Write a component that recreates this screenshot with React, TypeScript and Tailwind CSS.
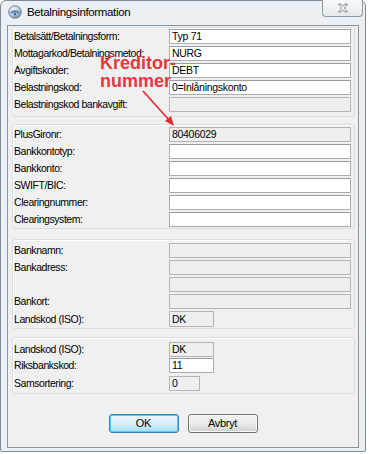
import React from "react";

const font = { fontFamily: '"Liberation Sans", Arial, sans-serif' };

function Field({
  label,
  value,
  disabled,
  width = "w-[184px]",
  height = "h-[15px]",
  className = "",
}: {
  label?: string;
  value?: string;
  disabled?: boolean;
  width?: string;
  height?: string;
  className?: string;
}) {
  return (
    <div className={`flex items-center ${className}`}>
      <div className="w-[156px] shrink-0 pl-[1px] text-[10.5px] tracking-[-0.45px] text-black leading-none whitespace-nowrap">
        {label}
      </div>
      <div
        className={`${width} ${height} flex items-center pl-[2px] text-[10.5px] tracking-[-0.3px] leading-none text-black border ${
          disabled
            ? "bg-[#efefef] border-[#b4b4b4]"
            : "bg-white border-[#abadb3] border-t-[#9a9ca3]"
        }`}
      >
        {value}
      </div>
    </div>
  );
}

function Group({ children, className = "" }: { children: React.ReactNode; className?: string }) {
  return (
    <div className={`border border-[#d5dfe5] rounded-[3px] shadow-[inset_1px_1px_0_#ffffff] pr-[3px] ${className}`}>
      {children}
    </div>
  );
}

export default function App() {
  return (
    <div className="relative w-[369px] h-[454px] bg-white overflow-hidden" style={font}>
      <div className="w-[366px] h-[452px] border border-[#808b94] rounded-t-[6px] rounded-b-[2px] bg-[#eaf0f4] flex flex-col px-[6px]">
        {/* title bar */}
        <div className="h-[24px] shrink-0 flex items-start relative">
          <svg width="14" height="14" viewBox="0 0 14 14" className="mt-[4px] ml-[1px]">
            <defs>
              <radialGradient id="ic" cx="40%" cy="35%" r="70%">
                <stop offset="0%" stopColor="#ffffff" />
                <stop offset="60%" stopColor="#b9c4cc" />
                <stop offset="100%" stopColor="#6f7d88" />
              </radialGradient>
            </defs>
            <circle cx="7" cy="7" r="6.3" fill="url(#ic)" stroke="#6c7a85" strokeWidth="0.8" />
            <path d="M3 8 C5 5.5 9 5.5 11 8" stroke="#3c79c9" strokeWidth="1.6" fill="none" />
            <circle cx="7" cy="9" r="1.4" fill="#2f63ad" />
          </svg>
          <div className="ml-[5px] mt-[6px] text-[11.5px] tracking-[-0.35px] leading-none text-black">
            Betalningsinformation
          </div>
          <div className="absolute right-[-4px] top-[-1px] w-[41px] h-[17px] border border-[#8e9aa4] border-t-0 rounded-b-[4px] bg-gradient-to-b from-[#f6f9fb] to-[#e3e9ed] flex items-center justify-center">
            <svg width="12" height="10" viewBox="0 0 12 10">
              <path
                d="M1.5 1 L4 1 L6 3.3 L8 1 L10.5 1 L7.3 5 L10.5 9 L8 9 L6 6.7 L4 9 L1.5 9 L4.7 5 Z"
                fill="#f4f6f8"
                stroke="#7a8792"
                strokeWidth="0.9"
              />
            </svg>
          </div>
        </div>

        {/* client area */}
        <div className="h-[423px] shrink-0 border border-[#8b9399] bg-[#f0f0f0] pl-[4px] pr-[3px] pt-[1px] flex flex-col">
          <Group className="pt-[1px] pb-[4px]">
            <Field label="Betalsätt/Betalningsform:" value="Typ 71" />
            <Field label="Mottagarkod/Betalningsmetod:" value="NURG" className="mt-[2px]" />
            <Field label="Avgiftskoder:" value="DEBT" className="mt-[2px]" />
            <Field label="Belastningskod:" value="0=Inlåningskonto" className="mt-[2px]" />
            <Field label="Belastningskod bankavgift:" disabled className="mt-[2px]" />
          </Group>

          <Group className="mt-[7px] pt-[2px] pb-[1px]">
            <Field label="PlusGironr:" value="80406029" disabled />
            <Field label="Bankkontotyp:" className="mt-[2px]" />
            <Field label="Bankkonto:" className="mt-[2px]" />
            <Field label="SWIFT/BIC:" className="mt-[2px]" />
            <Field label="Clearingnummer:" className="mt-[2px]" />
            <Field label="Clearingsystem:" className="mt-[2px]" />
          </Group>

          <Group className="mt-[10px] pt-[3px] pb-[1px]">
            <Field label="Banknamn:" disabled />
            <Field label="Bankadress:" disabled className="mt-[2px]" />
            <Field disabled className="mt-[2px]" />
            <Field label="Bankort:" disabled className="mt-[2px]" />
            <Field label="Landskod (ISO):" value="DK" disabled width="w-[45px]" height="h-[16px]" className="mt-[2px]" />
          </Group>

          <Group className="mt-[8px] pt-[4px] pb-[2px]">
            <Field label="Landskod (ISO):" value="DK" disabled width="w-[45px]" />
            <Field label="Riksbankskod:" value="11" width="w-[45px]" className="mt-[1px]" />
            <Field label="Samsortering:" value="0" disabled width="w-[31px]" className="mt-[3px]" />
          </Group>

          <div className="mt-[20px] flex justify-center gap-[9px] pr-[1px]">
            <button className="w-[70px] h-[19px] rounded-[3px] border border-[#3c7fb1] shadow-[inset_0_0_0_1px_#48d4f7] bg-gradient-to-b from-[#eaf6fd] via-[#d9f0fc] to-[#a7d9f5] text-[11px] tracking-[-0.3px] leading-none text-black">
              OK
            </button>
            <button className="w-[70px] h-[19px] rounded-[3px] border border-[#707070] shadow-[inset_0_0_0_1px_#fcfcfc] bg-gradient-to-b from-[#f2f2f2] via-[#ebebeb] to-[#cfcfcf] text-[11px] tracking-[-0.3px] leading-none text-black">
              Avbryt
            </button>
          </div>
        </div>
      </div>

      {/* red annotation */}
      <div className="absolute left-[100px] top-[54px] text-[18px] leading-[18px] font-bold text-[#e8383d] whitespace-pre">
        {"Kreditor-\nnummer"}
      </div>
      <svg className="absolute left-0 top-0" width="369" height="454" viewBox="0 0 369 454">
        <line x1="143" y1="91" x2="170" y2="121" stroke="#e3262c" strokeWidth="1.6" />
        <polygon points="174,126 165,121 171,116" fill="#e3262c" />
      </svg>
    </div>
  );
}
